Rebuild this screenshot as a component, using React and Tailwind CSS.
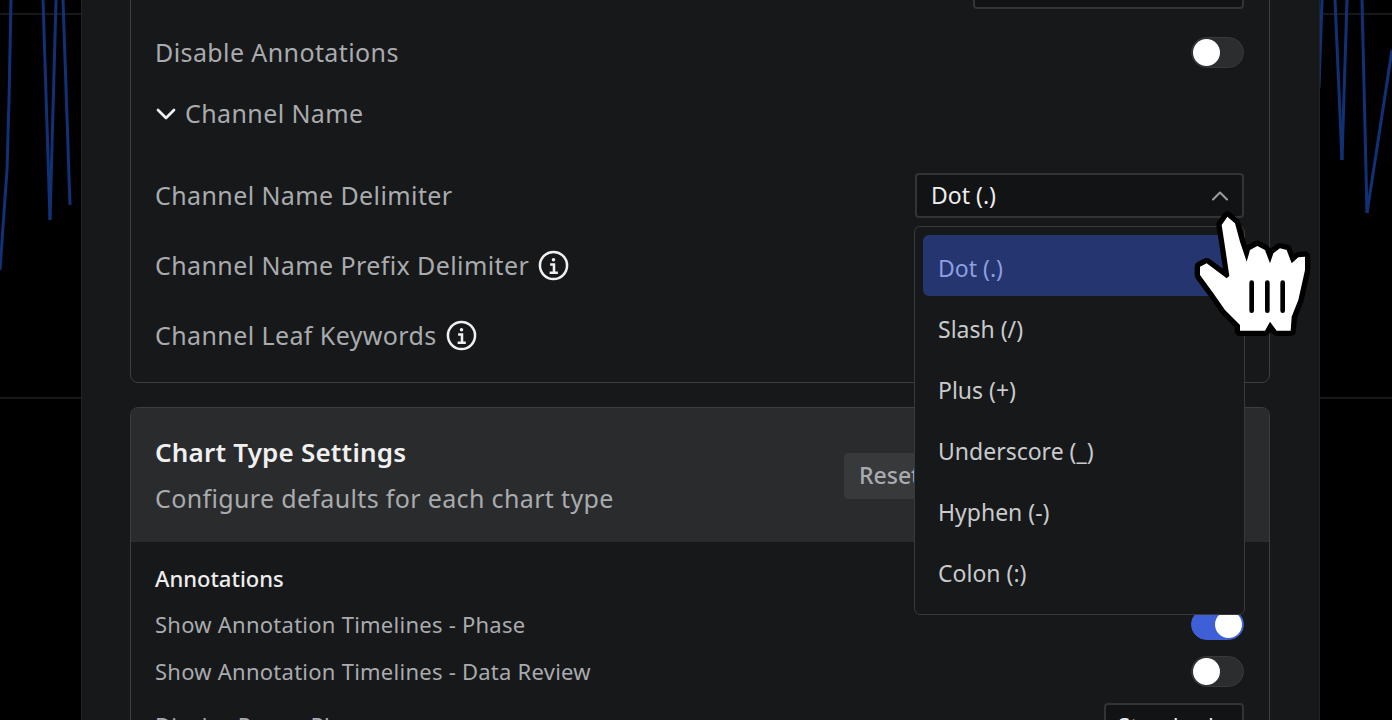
import React from 'react';
import { ChevronDown, ChevronUp } from 'lucide-react';

const font = { fontFamily: '"Noto Sans", sans-serif' };

const delimiters = ['Dot (.)', 'Slash (/)', 'Plus (+)', 'Underscore (_)', 'Hyphen (-)', 'Colon (:)'];

const InfoIcon = () => (
  <svg viewBox="0 0 32 32" className="w-[31px] h-[31px] shrink-0" fill="none" stroke="#f0f0f0">
    <circle cx="16" cy="16" r="14" strokeWidth="2.6" />
    <circle cx="16" cy="10" r="1.8" fill="#f0f0f0" stroke="none" />
    <path d="M12.5 15h4v8M12 23.5h8.5" strokeWidth="2.6" />
  </svg>
);

const Toggle = ({ on }) => (
  <div
    className={`w-[53px] h-[31px] rounded-full flex items-center p-px border shrink-0 ${
      on ? 'bg-[#3f5fd6] border-[#3f5fd6] justify-end' : 'bg-[#2b2d2f] border-[#37393b] justify-start'
    }`}
  >
    <div className="w-[27px] h-[27px] rounded-full bg-white" />
  </div>
);

const Row = ({ label, info, children }) => (
  <div className="flex items-center justify-between h-[45px]">
    <div className="flex items-center gap-[9px] text-[25px] tracking-[0.4px] text-[#a9abae]">
      {label}
      {info && <InfoIcon />}
    </div>
    {children}
  </div>
);

const ChartBackdrop = ({ lines }) => (
  <svg className="w-full h-full" fill="none">
    <path d="M0 14H100M0 398H100" stroke="#17181a" strokeWidth="2" />
    {lines.map((d) => (
      <path key={d} d={d} stroke="#113177" strokeWidth="3" />
    ))}
  </svg>
);

const Cursor = () => (
  <svg viewBox="0 0 450 510" className="absolute z-20 left-[1170px] top-[170px] w-[150px] h-[170px]">
    <path
      d="M172 140L155 165L165 230L178 318L170 325L110 280L90 290L90 315L130 370L165 420L210 465L210 482L285 482L300 455L320 482L362 482L365 440L385 390L405 300L405 260L385 262L365 280L350 240L330 235L310 250L300 280L285 240L262 228L240 240L230 275L210 215L195 160Z"
      fill="#fff"
      stroke="#000"
      strokeWidth="32"
      strokeLinejoin="round"
      paintOrder="stroke"
    />
    <path d="M245 338V422M292 338V422M338 338V422" stroke="#000" strokeWidth="14" strokeLinecap="round" />
  </svg>
);

export default function App() {
  return (
    <div className="relative flex h-[720px] overflow-hidden bg-black" style={font}>
      {/* chart peeking out behind the modal */}
      <div className="w-[81px] shrink-0">
        <ChartBackdrop
          lines={[
            'M11 0L9 100L7 170L0 270',
            'M43 0L50 220',
            'M56 0L50 220',
            'M63 0L70 205',
          ]}
        />
      </div>

      <div className="flex-1 min-w-0 bg-[#17181a] border-x border-[#222325] pl-[48px] pr-[49px] -mt-[60px]">
        {/* General settings card, scrolled past the top */}
        <div className="mt-[22px] border border-[#3b3d3f] rounded-lg pl-[24px] pr-[25px] pb-[24px]">
          <div className="flex justify-end">
            <div className="w-[271px] h-[46px] rounded border-2 border-[#323436] bg-[#121315]" />
          </div>
          <div className="flex items-center justify-between h-[31px] mt-[28px] text-[25px] tracking-[0.4px] text-[#a9abae]">
            Disable Annotations
            <Toggle />
          </div>
          <div className="flex items-center gap-[3px] h-[30px] mt-[31px] text-[25px] tracking-[0.4px] text-[#a9abae]">
            <ChevronDown className="w-[32px] h-[32px] -ml-[5px] text-[#f0f0f0]" strokeWidth={2} />
            Channel Name
          </div>
          <div className="flex flex-col gap-[25px] mt-[44px]">
            <Row label="Channel Name Delimiter">
              <div className="relative w-[329px] h-[45px] rounded border-2 border-[#323436] bg-[#121315] flex items-center justify-between pl-[14px] pr-[8px] text-[23px] text-[#eeeeee]">
                Dot (.)
                <ChevronUp className="w-[28px] h-[28px] text-[#9b9da0]" strokeWidth={1.8} />
                <div className="absolute z-10 -left-[3px] top-[51px] w-[331px] h-[389px] rounded-md border border-[#38393b] bg-[#17181a] p-2 text-[23px] text-[#c9cacc]">
                  {delimiters.map((d, i) => (
                    <div
                      key={d}
                      className={`h-[61px] flex items-center pl-[15px] pt-[5px] rounded-md ${
                        i === 0 ? 'bg-[#24356f] text-[#8d9fe0]' : ''
                      }`}
                    >
                      {d}
                    </div>
                  ))}
                </div>
              </div>
            </Row>
            <Row label="Channel Name Prefix Delimiter" info />
            <Row label="Channel Leaf Keywords" info />
          </div>
        </div>

        {/* Chart type settings card */}
        <div className="mt-[24px] border border-[#3b3d3f] rounded-lg overflow-hidden">
          <div className="h-[134px] bg-[#292b2d] pl-[24px] pr-[25px] flex items-center justify-between">
            <div>
              <div className="text-[26px] tracking-[0.2px] font-semibold text-[#f0f0f0] leading-[36px]">Chart Type Settings</div>
              <div className="text-[25px] tracking-[0.35px] text-[#a9abae] leading-[36px] mt-[10px]">Configure defaults for each chart type</div>
            </div>
            <div className="w-[400px] h-[46px] mt-[1px] rounded bg-[#37393b] flex items-center pl-[15px] text-[23px] font-medium text-[#a9abae]">
              Reset
            </div>
          </div>
          <div className="pl-[24px] pr-[25px] pt-[21px]">
            <div className="text-[22px] font-medium text-[#eeeeee] leading-[30px]">Annotations</div>
            <div className="flex items-center justify-between h-[31px] mt-[16px] text-[22px] tracking-[0.25px] text-[#a9abae]">
              Show Annotation Timelines - Phase
              <Toggle on />
            </div>
            <div className="flex items-center justify-between h-[31px] mt-[16px] text-[22px] tracking-[0.25px] text-[#a9abae]">
              Show Annotation Timelines - Data Review
              <Toggle />
            </div>
            <div className="flex items-center justify-between h-[45px] mt-[16px] text-[22px] tracking-[0.25px] text-[#a9abae]">
              Display Range Plan
              <div className="w-[140px] h-[45px] rounded border-2 border-[#323436] bg-[#121315] pl-[12px] flex items-center text-[#eeeeee]">
                Standard
              </div>
            </div>
          </div>
        </div>
      </div>

      <div className="w-[72px] shrink-0">
        <ChartBackdrop
          lines={[
            'M2 0L-1 88',
            'M15 0L22 160',
            'M27 0L22 160',
            'M42 0L47 213',
            'M72 50L47 213',
          ]}
        />
      </div>

      <Cursor />
    </div>
  );
}
